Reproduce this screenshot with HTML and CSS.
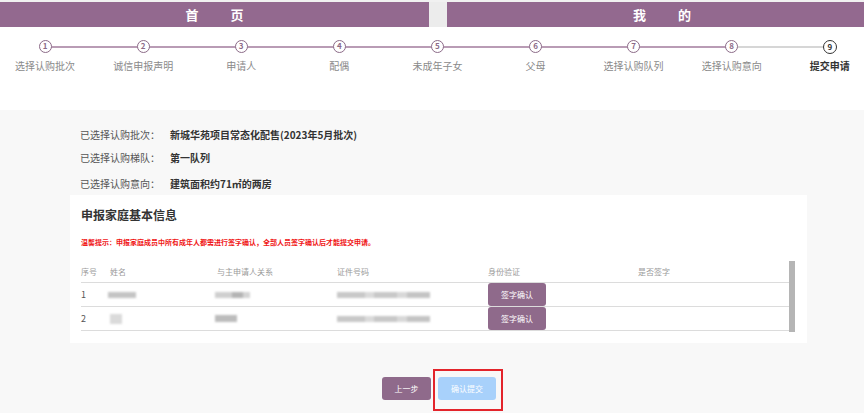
FILE: index.html
```html
<!DOCTYPE html>
<html lang="zh-CN">
<head>
<meta charset="utf-8">
<title>提交申请</title>
<link rel="stylesheet" href="styles.css">
</head>
<body>
<div class="topbar">
  <div class="tab tab-left">首<span class="sp"></span>页</div>
  <div class="tab-gap"></div>
  <div class="tab tab-right">我<span class="sp"></span>的</div>
</div>

<div class="steps-wrap">
  <div class="steps">
    <div class="step"><span class="num">1</span><span class="label">选择认购批次</span></div>
    <div class="step"><span class="num">2</span><span class="label">诚信申报声明</span></div>
    <div class="step"><span class="num">3</span><span class="label">申请人</span></div>
    <div class="step"><span class="num">4</span><span class="label">配偶</span></div>
    <div class="step"><span class="num">5</span><span class="label">未成年子女</span></div>
    <div class="step"><span class="num">6</span><span class="label">父母</span></div>
    <div class="step"><span class="num">7</span><span class="label">选择认购队列</span></div>
    <div class="step"><span class="num">8</span><span class="label">选择认购意向</span></div>
    <div class="step current"><span class="num">9</span><span class="label">提交申请</span></div>
  </div>
</div>

<div class="main">
  <div class="info">
    <div class="info-line"><span class="info-label">已选择认购批次：</span><span class="info-value">新城华苑项目常态化配售(2023年5月批次)</span></div>
    <div class="info-line"><span class="info-label">已选择认购梯队：</span><span class="info-value">第一队列</span></div>
    <div class="info-line info-line-last"><span class="info-label">已选择认购意向：</span><span class="info-value">建筑面积约71㎡的两房</span></div>
  </div>

  <div class="card">
    <div class="card-title">申报家庭基本信息</div>
    <div class="warning">温馨提示：申报家庭成员中所有成年人都需进行签字确认，全部人员签字确认后才能提交申请。</div>
    <div class="table-wrap">
      <div class="table">
        <div class="row head">
          <div>序号</div><div>姓名</div><div>与主申请人关系</div><div>证件号码</div><div>身份验证</div><div>是否签字</div>
        </div>
        <div class="row">
          <div>1</div>
          <div><span class="blur b-name1"></span></div>
          <div><span class="blur b-rel1"></span></div>
          <div><span class="blur b-id"></span></div>
          <div><button class="btn-sign">签字确认</button></div>
          <div></div>
        </div>
        <div class="row">
          <div>2</div>
          <div><span class="blur b-name2"></span></div>
          <div><span class="blur b-rel2"></span></div>
          <div><span class="blur b-id"></span></div>
          <div><button class="btn-sign">签字确认</button></div>
          <div></div>
        </div>
      </div>
      <div class="scrollbar"></div>
    </div>
  </div>

  <div class="actions">
    <button class="btn-prev">上一步</button>
    <div class="highlight"><button class="btn-submit">确认提交</button></div>
  </div>
</div>
</body>
</html>
```

FILE: styles.css
```css
html, body {
  margin: 0;
  padding: 0;
}
body {
  width: 864px;
  height: 413px;
  overflow: hidden;
  background: #f8f8f8;
  font-family: "Noto Sans CJK SC", "Noto Sans", sans-serif;
  color: #333;
}

/* top navigation bar */
.topbar {
  display: flex;
  height: 27px;
  padding-top: 2px;
  box-sizing: border-box;
  background: #f1f1f1;
}
.tab {
  background: #93698f;
  color: #fff;
  font-size: 13px;
  font-weight: bold;
  line-height: 25px;
  text-align: center;
}
.tab-left {
  width: 429px;
}
.tab-gap {
  width: 18px;
  background: #ececec;
}
.tab-right {
  flex: 1;
  padding-left: 13px;
}
.sp {
  display: inline-block;
  width: 32px;
}

/* steps */
.steps-wrap {
  background: #fff;
  height: 83px;
  overflow: hidden;
}
.steps {
  display: grid;
  grid-template-columns: repeat(9, 98.1px);
  margin-left: -4px;
  padding-top: 13px;
}
.step {
  position: relative;
  display: flex;
  flex-direction: column;
  align-items: center;
}
.step + .step::before {
  content: "";
  position: absolute;
  left: -50%;
  width: 100%;
  top: 6px;
  height: 2px;
  background: #b99cb5;
}
.step.current::before {
  background: #d6d6d6;
}
.num {
  position: relative;
  z-index: 1;
  width: 13px;
  height: 13px;
  box-sizing: border-box;
  border: 1.5px solid #8c6b88;
  border-radius: 50%;
  background: #fff;
  color: #8c6b88;
  font-size: 8px;
  font-weight: bold;
  line-height: 10px;
  text-align: center;
}
.label {
  margin-top: 6px;
  font-size: 10px;
  line-height: 14px;
  color: #8a8a8a;
  white-space: nowrap;
}
.current .num {
  width: 14px;
  height: 14px;
  border-color: #333;
  color: #333;
  line-height: 11px;
  margin-top: -0.5px;
}
.current .label {
  margin-top: 5.5px;
  color: #333;
  font-weight: bold;
}

/* main area */
.main {
  padding-top: 17px;
}
.info {
  padding-left: 80px;
}
.info-line {
  font-size: 10px;
  line-height: 16px;
  margin-bottom: 7px;
}
.info-line-last {
  margin-top: 10px;
  margin-bottom: 0;
}
.info-label {
  color: #555;
}
.info-value {
  margin-left: 10px;
  color: #333;
  font-weight: bold;
}

.card {
  margin: 3px 0 0 70px;
  width: 737px;
  box-sizing: border-box;
  background: #fff;
  padding: 12px 12px 11px 11px;
}
.card-title {
  font-size: 12px;
  font-weight: bold;
  line-height: 16px;
  color: #333;
}
.warning {
  margin-top: 14px;
  font-size: 7px;
  line-height: 10px;
  color: #f01515;
  font-weight: bold;
  white-space: nowrap;
}
.table-wrap {
  margin-top: 14px;
  display: flex;
  align-items: flex-start;
}
.table {
  flex: 1;
}
.row {
  display: grid;
  grid-template-columns: 29px 107px 120px 151px 150px 1fr;
  height: 24px;
  box-sizing: border-box;
  border-bottom: 1px solid #dcdcdc;
  align-items: center;
  font-size: 9px;
  color: #555;
}
.row.head {
  height: 22px;
  font-size: 8px;
  color: #9a9a9a;
}
.scrollbar {
  width: 6px;
  height: 71px;
  background: #b5b5b5;
}
.blur {
  display: block;
  height: 6px;
  background: #c4c4c4;
  filter: blur(1.2px);
}
.b-name1 {
  width: 28px;
  margin-left: -2px;
}
.b-name2 {
  width: 12px;
  height: 10px;
  background: #dadada;
}
.b-rel1 {
  width: 35px;
  margin-left: -2px;
  background: linear-gradient(90deg, #cfcfcf 0 50%, #b4b4b4 50% 80%, #d4d4d4 80%);
}
.b-rel2 {
  width: 22px;
  margin-left: -2px;
  height: 7px;
  background: #bcbcbc;
}
.b-id {
  width: 93px;
  background: linear-gradient(90deg, #c8c8c8 0 30%, #dadada 30% 40%, #c8c8c8 40% 65%, #d8d8d8 65% 75%, #c4c4c4 75%);
}
.btn-sign {
  display: block;
  width: 58px;
  height: 23px;
  border: 0;
  border-radius: 3px;
  background: #8f6a8b;
  color: #fff;
  font-family: inherit;
  font-size: 8px;
  padding: 0;
}

/* bottom actions */
.actions {
  display: flex;
  justify-content: center;
  align-items: flex-start;
  padding-left: 21px;
  margin-top: 26px;
}
.btn-prev,
.btn-submit {
  height: 23px;
  border: 0;
  border-radius: 3px;
  color: #fff;
  font-family: inherit;
  font-size: 8px;
  padding: 0;
}
.btn-prev {
  width: 49px;
  margin-top: 8px;
  background: #8f6a8b;
}
.highlight {
  margin-left: 2px;
  border: 2px solid #e3242b;
  padding: 6px 5px 9px 3px;
}
.btn-submit {
  display: block;
  width: 58px;
  background: #a8d1fb;
}
```
